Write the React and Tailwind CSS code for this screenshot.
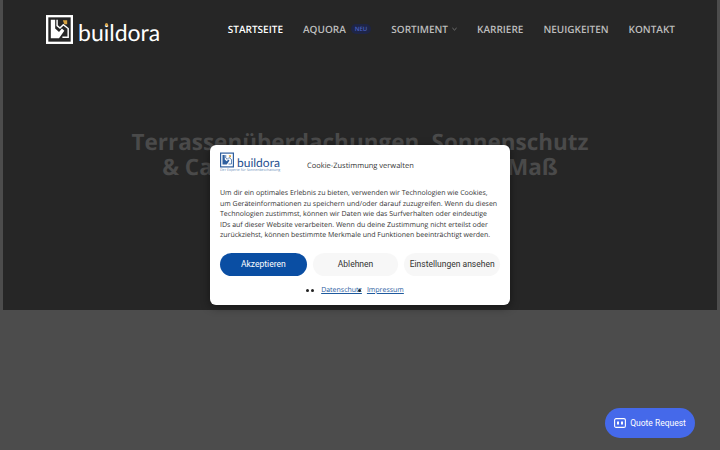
import React from "react";

const Logo = ({ frame, accent, size }) => (
  <svg viewBox="0 0 28 30" className={size} fill="none">
    <rect x="1.2" y="1.2" width="25.6" height="27.6" stroke={frame} strokeWidth="2.4" fill="none" />
    <path d="M5 5h4.5v9l4 3.5 3-3.5 2.5 2.2-5.5 7.8H5z" fill={frame} />
    <path d="M11.5 5v6l3 2.5 3.5-3.5 5 4v9h-6" stroke={frame} strokeWidth="1.5" />
    <path d="M17.5 5.5h4.5v4h-3z" fill={accent} />
  </svg>
);

const navItem = "text-[10px] leading-[18px] font-semibold text-[#bdbdbd] whitespace-nowrap";

export default function App() {
  return (
    <div className="relative h-[450px] w-[720px] overflow-hidden bg-[#4c4c4c] px-[3px] font-['Open_Sans',sans-serif] [text-rendering:geometricPrecision]">
      <div className="h-[310px] bg-[#262626]">
        <header className="flex h-[58px] items-center justify-between pl-[43px] pr-[42px]">
          <div className="mt-px flex items-end gap-[5px]">
            <Logo frame="#ffffff" accent="#d9a441" size="h-[29px] w-[27px]" />
            <span className="relative font-['Lato',sans-serif] text-[23px] leading-[24px] font-normal text-white">
              buildora
              <span className="absolute top-[3px] left-[27px] h-[3px] w-[3px] rounded-full bg-[#d9a441]" />
            </span>
          </div>
          <nav className="flex items-center gap-5">
            <span className="text-[10px] leading-[18px] font-semibold whitespace-nowrap text-white">STARTSEITE</span>
            <span className="flex items-center gap-[5px]">
              <span className={navItem}>AQUORA</span>
              <span className="rounded-full bg-[#1e2547] px-1 text-[6px] leading-[10px] font-semibold text-[#4a62c4]">NEU</span>
            </span>
            <span className="flex items-center gap-1">
              <span className={navItem}>SORTIMENT</span>
              <svg viewBox="0 0 6 4" className="h-1 w-[5px]" fill="none" stroke="#8f8f8f" strokeWidth="0.9">
                <path d="M0.5 0.8 3 3.2 5.5 0.8" />
              </svg>
            </span>
            <span className={navItem}>KARRIERE</span>
            <span className={navItem}>NEUIGKEITEN</span>
            <span className={navItem}>KONTAKT</span>
          </nav>
        </header>
        <h1 className="mt-[71px] text-center text-[22.5px] leading-[25px] font-bold text-[#4a4a4a]">
          Terrassenüberdachungen, Sonnenschutz
          <br />
          &amp; Carports aus Aluminium auf Maß
        </h1>
      </div>

      <div className="absolute top-[145px] left-[210px] h-[160px] w-[300px] rounded-md bg-white px-[10px] pt-[7px] shadow-[0_2px_10px_rgba(0,0,0,0.45)]">
        <div className="flex items-start">
          <div className="w-[60px] shrink-0">
            <div className="flex items-end gap-[3px]">
              <Logo frame="#2f5f9e" accent="#d9a441" size="h-[16px] w-[14px]" />
              <span className="font-['Lato',sans-serif] text-[12px] leading-[11px] text-[#1f4f8f]">buildora</span>
            </div>
            <div className="mt-[1px] text-[3.6px] leading-[4px] whitespace-nowrap text-[#6c8fb8]">Der Experte für Sonnenbeschattung</div>
          </div>
          <div className="mt-[7px] ml-[27px] text-[7.5px] leading-[14px] text-[#333333]">Cookie-Zustimmung verwalten</div>
        </div>
        <p className="mt-[16px] text-[7px] leading-[10.6px] whitespace-nowrap text-[#333333]">
          Um dir ein optimales Erlebnis zu bieten, verwenden wir Technologien wie Cookies,
          <br />
          um Geräteinformationen zu speichern und/oder darauf zuzugreifen. Wenn du diesen
          <br />
          Technologien zustimmst, können wir Daten wie das Surfverhalten oder eindeutige
          <br />
          IDs auf dieser Website verarbeiten. Wenn du deine Zustimmung nicht erteilst oder
          <br />
          zurückziehst, können bestimmte Merkmale und Funktionen beeinträchtigt werden.
        </p>
        <div className="mt-[11px] flex gap-[6px] font-['Roboto',sans-serif] text-[8.5px] leading-[23px]">
          <button className="h-[23px] w-[87px] rounded-full bg-[#0a4ea3] text-white">Akzeptieren</button>
          <button className="h-[23px] w-[86px] rounded-full bg-[#f7f7f7] text-[#333333]">Ablehnen</button>
          <button className="h-[23px] w-[96px] rounded-full bg-[#f7f7f7] text-[#333333]">Einstellungen ansehen</button>
        </div>
        <div className="mt-[9px] flex items-center justify-center gap-[5px] pr-[10px] text-[7px] leading-[12px] text-[#1f5a9e]">
          <span className="flex gap-[2px]">
            <span className="h-[3px] w-[3px] rounded-full bg-[#222222]" />
            <span className="h-[3px] w-[3px] rounded-full bg-[#222222]" />
          </span>
          <span className="relative ml-[2px]">
            <span className="underline">Datenschutz</span>
            <span className="absolute top-[4px] right-px h-[3px] w-[3px] rounded-full bg-[#222222]" />
          </span>
          <span className="underline">Impressum</span>
        </div>
      </div>

      <button className="absolute top-[408px] left-[605px] flex h-[30px] w-[90px] items-center justify-center gap-[4px] rounded-full bg-[#4569ea] font-['Roboto',sans-serif] text-[8.5px] text-white">
        <svg viewBox="0 0 12 10" className="h-[10px] w-[12px]" fill="none">
          <rect x="0.6" y="0.6" width="10.8" height="8.8" rx="1.5" stroke="white" strokeWidth="1.1" />
          <rect x="3" y="3.5" width="2" height="3" fill="white" />
          <rect x="7" y="3.5" width="2" height="3" fill="white" />
        </svg>
        Quote Request
      </button>
    </div>
  );
}
